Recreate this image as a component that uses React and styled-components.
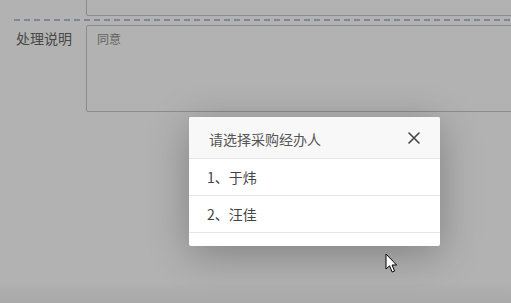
import React from "react";
import styled, { createGlobalStyle } from "styled-components";

const Global = createGlobalStyle`
  html, body { margin: 0; padding: 0; background: #fff; overflow: hidden; }
  body { font-family: "Noto Sans CJK SC", "Noto Sans", sans-serif; }
  #root { width: 511px; height: 303px; position: relative; overflow: hidden; }
`;

const Page = styled.div`
  width: 600px;
  margin-top: -41px;
  padding-left: 14px;
  box-sizing: border-box;
`;

const FieldRow = styled.div`
  display: flex;
  align-items: flex-start;
`;

const Label = styled.div`
  width: 72px;
  box-sizing: border-box;
  padding: 4px 14px 0 0;
  text-align: right;
  font-size: 14px;
  line-height: 18px;
  color: #666;
  flex: none;
  white-space: nowrap;
`;

const TextBox = styled.div`
  flex: 1;
  height: ${(p) => p.$h}px;
  box-sizing: border-box;
  border: 1px solid #c8c8c8;
  border-radius: 2px;
  padding: 4px 10px;
  font-size: 12px;
  line-height: 18px;
  color: #8c8c8c;
`;

const Divider = styled.div`
  height: 2px;
  margin: 3px 0 4px;
  background: repeating-linear-gradient(
    to right,
    #b4c0de 0 6px,
    transparent 6px 10px
  );
`;

const Mask = styled.div`
  position: absolute;
  inset: 0;
  background: linear-gradient(
    to bottom,
    rgba(0, 0, 0, 0.3) 0,
    rgba(0, 0, 0, 0.3) 93%,
    rgba(0, 0, 0, 0.34) 100%
  );
`;

const Dialog = styled.div`
  position: absolute;
  left: 189px;
  top: 117px;
  width: 251px;
  background: #fff;
  border-radius: 2px;
  padding-bottom: 13px;
  box-shadow: 0 8px 40px rgba(0, 0, 0, 0.28);
`;

const Header = styled.div`
  height: 42px;
  box-sizing: border-box;
  display: flex;
  align-items: center;
  justify-content: space-between;
  padding: 0 20px 0 20px;
  background: #f8f8f8;
  border-bottom: 1px solid #e4e4e4;
  border-radius: 2px 2px 0 0;
`;

const Title = styled.span`
  font-size: 14px;
  color: #555;
  padding-top: 2px;
`;

const Close = styled.button`
  border: none;
  background: none;
  padding: 0;
  width: 12px;
  height: 12px;
  display: flex;
  cursor: pointer;
`;

const Option = styled.div`
  height: 37px;
  box-sizing: border-box;
  display: flex;
  align-items: center;
  padding-left: 18px;
  font-size: 14px;
  color: #444;
  border-bottom: 1px solid #e6e6e6;
`;

const Pointer = styled.svg`
  position: absolute;
  left: 385px;
  top: 253px;
`;

export default function App() {
  const people = ["1、于炜", "2、汪佳"];
  return (
    <>
      <Global />
      <Page>
        <FieldRow>
          <Label />
          <TextBox $h={57} />
        </FieldRow>
        <Divider />
        <FieldRow>
          <Label>处理说明</Label>
          <TextBox $h={87}>同意</TextBox>
        </FieldRow>
      </Page>
      <Mask>
        <Dialog>
          <Header>
            <Title>请选择采购经办人</Title>
            <Close aria-label="关闭">
              <svg width="12" height="12" viewBox="0 0 12 12">
                <path d="M1 1 L11 11 M11 1 L1 11" stroke="#444" strokeWidth="1.6" strokeLinecap="round" />
              </svg>
            </Close>
          </Header>
          {people.map((p) => (
            <Option key={p}>{p}</Option>
          ))}
        </Dialog>
        <Pointer width="13" height="21" viewBox="0 0 13 21">
          <path d="M1 1 L1 16 L4.5 12.8 L7.2 19 L9.6 18 L7 12 L11.6 12 Z" fill="#fff" stroke="#000" strokeWidth="1" strokeLinejoin="round" />
        </Pointer>
      </Mask>
    </>
  );
}
